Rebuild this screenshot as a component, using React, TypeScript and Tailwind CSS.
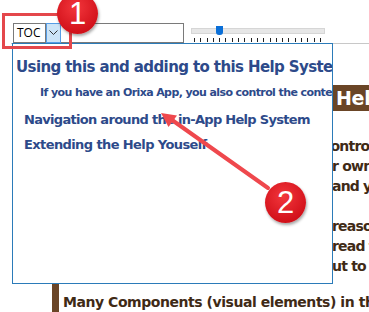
import React from "react";

const ticks = Array.from({ length: 21 }, (_, i) => i);

const pageLines = ["control the content", "r own pages", "and your users", "", "reasons", " read them", "ut to them"];

function Badge({ n, className }: { n: string; className: string }) {
  return (
    <div
      className={`absolute flex h-[41px] w-[41px] items-center justify-center rounded-full bg-[radial-gradient(circle_at_45%_35%,#f2363c,#d3121b_70%,#b50d15)] shadow-[1px_2px_3px_rgba(0,0,0,0.35)] ${className}`}
    >
      <span className="font-['Liberation_Sans',sans-serif] text-[31px] leading-none text-white">{n}</span>
    </div>
  );
}

export default function App() {
  return (
    <div className="relative h-[312px] w-[369px] overflow-hidden bg-white font-['DejaVu_Sans',sans-serif]">
      {/* toolbar */}
      <div className="flex h-[43px] items-start">
        <div className="ml-[13px] mt-[23px] flex h-[20px]">
          <div className="flex w-[33px] items-center border border-[#7a7a7a] pl-[3px] font-['Open_Sans',sans-serif] text-[12px] text-black">
            TOC
          </div>
          <div className="flex w-[15px] items-center justify-center border border-[#569de5] bg-[#cce4f7]">
            <svg width="9" height="6" viewBox="0 0 9 6">
              <path d="M0.5 0.5 L4.5 4.5 L8.5 0.5" fill="none" stroke="#333" strokeWidth="1" />
            </svg>
          </div>
          <div className="w-[123px] border border-l-0 border-[#7a7a7a] bg-white" />
        </div>
        <div className="ml-[7px] mt-[26px] flex w-[134px] flex-col">
          <div className="relative h-[9px]">
            <div className="absolute left-0 right-0 top-[2px] h-[6px] border border-[#d6d6d6] bg-[#e7e7e7]" />
            <div className="absolute left-[25px] top-0 h-[9px] w-[7px] rounded-b-[3px] bg-[#0a6fd8]" />
          </div>
          <div className="mt-[3px] flex w-[130px] justify-between pl-[3px]">
            {ticks.map((t) => (
              <div key={t} className="h-[4px] w-[1px] bg-[#222]" />
            ))}
          </div>
        </div>
      </div>

      {/* page behind the popup */}
      <div className="flex h-[269px]">
        <div className="ml-[1px] w-[1px] bg-[#c4c4c4]" />
        <div className="ml-[2px] w-[1px] bg-[#c4c4c4]" />
        <div className="ml-[8px] flex flex-1 flex-col border-t border-[#c8c8c8]">
          <div className="ml-[308px] mt-[41px] flex h-[27px] items-center bg-[#6a4526] pl-[17px] text-[19px] font-bold leading-none tracking-[-0.3px] text-white">
            Help
          </div>
          <div className="ml-[312px] mt-[25px] text-[14px] font-bold leading-[20px] tracking-[-0.8px] text-[#3f2a16]">
            {pageLines.map((l, i) => (
              <div key={i} className={`h-[20px] whitespace-nowrap ${i === 0 ? "" : "pl-[9px]"}`}>
                {l}
              </div>
            ))}
          </div>
          <div className="ml-[41px] mt-[6px] flex flex-1">
            <div className="w-[7px] bg-[#6a4526]" />
            <div className="pl-[4px] pt-[10px] text-[14px] font-bold leading-[20px] tracking-[-0.45px] whitespace-nowrap text-[#3f2a16]">
              Many Components (visual elements) in the
            </div>
          </div>
        </div>
      </div>

      {/* TOC dropdown */}
      <div className="absolute left-[12px] top-[43px] h-[241px] w-[321px] overflow-hidden border border-[#2b7bb9] bg-white font-bold text-[#2d4a8a]">
        <div className="ml-[3px] mt-[14px] whitespace-nowrap text-[15px] leading-[18px] tracking-[-0.6px]">
          Using this and adding to this Help System
        </div>
        <div className="ml-[27px] mt-[10px] whitespace-nowrap text-[11px] leading-[14px] tracking-[-0.6px]">
          If you have an Orixa App, you also control the content
        </div>
        <div className="ml-[11px] mt-[11px] whitespace-nowrap text-[13px] leading-[17px] tracking-[-0.7px]">
          Navigation around the in-App Help System
        </div>
        <div className="ml-[11px] mt-[8px] whitespace-nowrap text-[13px] leading-[17px] tracking-[-0.6px]">
          Extending the Help Youself
        </div>
      </div>

      {/* annotations */}
      <div className="absolute left-[2px] top-[13px] h-[36px] w-[70px] border-[3px] border-[#e4474b]" />
      <Badge n="1" className="left-[57px] top-[-7px]" />
      <svg className="pointer-events-none absolute left-0 top-0" width="369" height="312">
        <line x1="268" y1="188" x2="172" y2="120" stroke="#ef484d" strokeWidth="4" strokeLinecap="round" />
        <polygon points="161,113 177,115.5 168.5,127" fill="#ef484d" />
      </svg>
      <Badge n="2" className="left-[265px] top-[182px]" />
    </div>
  );
}
